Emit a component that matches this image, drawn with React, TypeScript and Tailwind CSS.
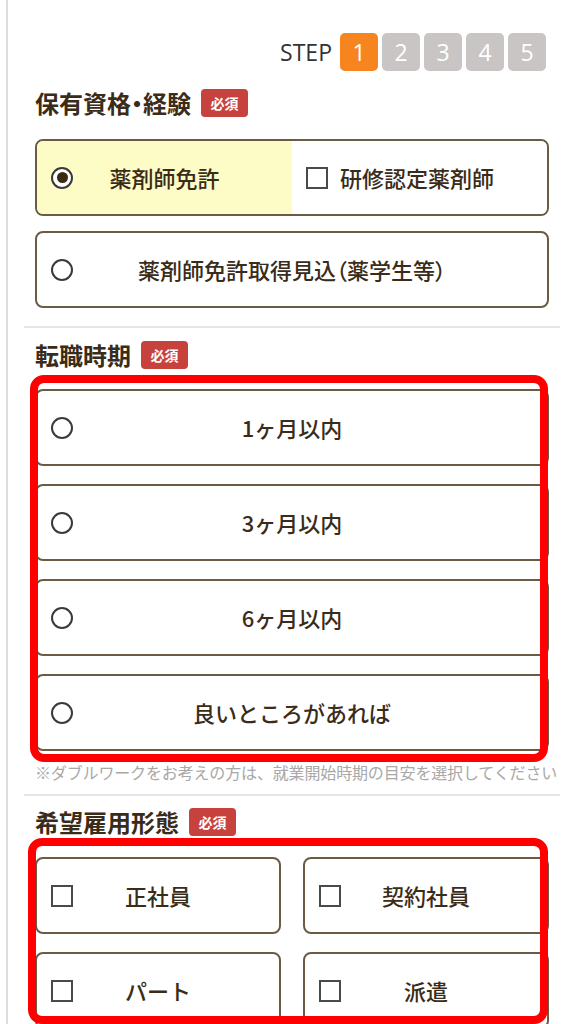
const font = { fontFamily: '"Noto Sans CJK JP", "Noto Sans", sans-serif' }

function Badge() {
  return (
    <span className="ml-[10px] inline-flex h-[28px] w-[47px] items-center justify-center rounded-[4px] bg-[#c7413d] text-[14px] font-bold leading-none text-white">
      必須
    </span>
  )
}

function Heading({ children }: { children: string }) {
  return (
    <div className="flex h-[30px] items-center">
      <h2 className="text-[24px] font-bold leading-[30px] text-[#3a2c18] [font-feature-settings:'palt']">{children}</h2>
      <Badge />
    </div>
  )
}

function Radio({ checked = false }: { checked?: boolean }) {
  return (
    <span className="flex h-[22px] w-[22px] shrink-0 items-center justify-center rounded-full border-2 border-[#3a3a3a] bg-white">
      {checked && <span className="h-[11px] w-[11px] rounded-full bg-[#3b2a14]" />}
    </span>
  )
}

function Check() {
  return <span className="block h-[22px] w-[22px] shrink-0 border-2 border-[#4a4a4a] bg-white" />
}

function RadioCard({ label }: { label: string }) {
  return (
    <div className="relative flex h-[77px] items-center justify-center rounded-[8px] border-2 border-[#6b5b45] bg-white">
      <span className="absolute left-[14px] top-1/2 -translate-y-1/2">
        <Radio />
      </span>
      <span className="text-[22px] font-medium text-[#3a2c18]">{label}</span>
    </div>
  )
}

function CheckCard({ label }: { label: string }) {
  return (
    <div className="relative flex h-[77px] items-center justify-center rounded-[8px] border-2 border-[#6b5b45] bg-white">
      <span className="absolute left-[14px] top-1/2 -translate-y-1/2">
        <Check />
      </span>
      <span className="text-[22px] font-medium text-[#3a2c18]">{label}</span>
    </div>
  )
}

export default function App() {
  const steps = [1, 2, 3, 4, 5]
  const periods = ['1ヶ月以内', '3ヶ月以内', '6ヶ月以内', '良いところがあれば']
  const types = ['正社員', '契約社員', 'パート', '派遣']

  return (
    <div className="relative min-h-[1024px] overflow-hidden bg-white pl-[6px]" style={font}>
      <div className="min-h-[1024px] border-l-2 border-[#dddddd] px-[27px] pt-[33px]">
        {/* steps */}
        <div className="flex items-center justify-end pr-[3px]">
          <span className="mr-[8px] text-[23px] font-medium text-[#333333]" style={{ fontFamily: '"Open Sans", sans-serif' }}>
            STEP
          </span>
          <div className="flex gap-[4px]">
            {steps.map((s) => (
              <span
                key={s}
                className={
                  s === 1
                    ? 'flex h-[38px] w-[38px] items-center justify-center rounded-[5px] bg-[#f6851f] text-[23px] text-white'
                    : 'flex h-[38px] w-[38px] items-center justify-center rounded-[5px] bg-[#c9c5c5] text-[23px] text-white'
                }
                style={{ fontFamily: '"Open Sans", sans-serif' }}
              >
                {s}
              </span>
            ))}
          </div>
        </div>

        {/* 保有資格 */}
        <div className="mt-[17px]">
          <Heading>保有資格・経験</Heading>
        </div>
        <div className="mt-[21px] flex h-[77px] overflow-hidden rounded-[8px] border-2 border-[#6b5b45]">
          <div className="relative flex w-1/2 items-center justify-center bg-[#fdfbc6]">
            <span className="absolute left-[14px] top-1/2 -translate-y-1/2">
              <Radio checked />
            </span>
            <span className="text-[22px] font-medium text-[#3a2c18]">薬剤師免許</span>
          </div>
          <div className="flex w-1/2 items-center gap-[12px] bg-white pl-[14px]">
            <Check />
            <span className="text-[22px] font-medium text-[#3a2c18]">研修認定薬剤師</span>
          </div>
        </div>
        <div className="mt-[15px]">
          <div className="relative flex h-[77px] items-center justify-center rounded-[8px] border-2 border-[#6b5b45] bg-white">
            <span className="absolute left-[14px] top-1/2 -translate-y-1/2">
              <Radio />
            </span>
            <span className="text-[22px] font-medium text-[#3a2c18] [font-feature-settings:'palt']">
              薬剤師免許取得見込（薬学生等）
            </span>
          </div>
        </div>

        <div className="-mx-[11px] mt-[18px] h-[2px] bg-[#e6e6e6]" />

        {/* 転職時期 */}
        <div className="mt-[12px]">
          <Heading>転職時期</Heading>
        </div>
        <div className="mt-[19px] flex flex-col gap-[18px]">
          {periods.map((p) => (
            <RadioCard key={p} label={p} />
          ))}
        </div>
        <p className="mt-[10px] whitespace-nowrap text-[16px] leading-[22px] tracking-[-0.15px] text-[#a8a8a8]">
          ※ダブルワークをお考えの方は、就業開始時期の目安を選択してください
        </p>

        <div className="-mx-[11px] mt-[11px] h-[2px] bg-[#e6e6e6]" />

        {/* 希望雇用形態 */}
        <div className="mt-[11px]">
          <Heading>希望雇用形態</Heading>
        </div>
        <div className="mt-[20px] grid grid-cols-2 gap-x-[22px] gap-y-[18px]">
          {types.map((t) => (
            <CheckCard key={t} label={t} />
          ))}
        </div>
      </div>

      {/* annotation frames */}
      <div className="pointer-events-none absolute left-[30px] top-[375px] h-[387px] w-[518px] rounded-[14px] border-[8px] border-[#ff0000]" />
      <div className="pointer-events-none absolute left-[28px] top-[838px] h-[186px] w-[520px] rounded-[14px] border-[8px] border-[#ff0000]" />
    </div>
  )
}
